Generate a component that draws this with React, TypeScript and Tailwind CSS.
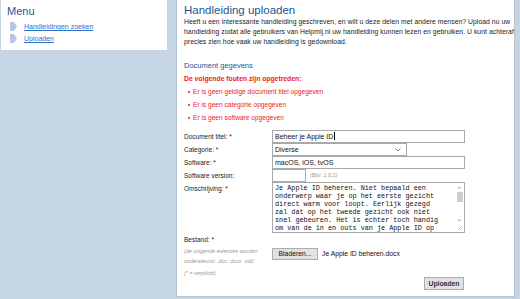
const fouten = [
  'Er is geen geldige document titel opgegeven',
  'Er is geen categorie opgegeven',
  'Er is geen software opgegeven',
];

const omschrijving = [
  'Je Apple ID beheren. Niet bepaald een',
  'onderwerp waar je op het eerste gezicht',
  'direct warm voor loopt. Eerlijk gezegd',
  'zal dat op het tweede gezicht ook niet',
  'snel gebeuren. Het is echter toch handig',
  'om van de in en outs van je Apple ID op',
];

const MenuArrow = () => (
  <svg width="7" height="9" viewBox="0 0 7 9" className="shrink-0">
    <path d="M0 0h4l3 4.5L4 9H0z" fill="#b6c7db" />
  </svg>
);

const Label = ({ children }: { children: React.ReactNode }) => (
  <div className="text-[6.5px] leading-[13px] text-[#222]">{children}</div>
);

const Box = ({ className, children }: { className: string; children?: React.ReactNode }) => (
  <div className={`border border-[#a9a9a9] bg-white px-[2px] text-[7px] leading-[11px] text-[#111] ${className}`}>
    {children}
  </div>
);

export default function App() {
  return (
    <div
      className="flex h-[299px] w-[520px] items-start bg-[#c5d5e3]"
      style={{ fontFamily: '"Liberation Sans", Arial, sans-serif' }}
    >
      {/* Menu */}
      <aside className="ml-px h-[50px] w-[166px] bg-white px-[6px] pt-[4px]">
        <h2 className="text-[11px] leading-[14px] text-[#1d5592]">Menu</h2>
        <ul className="mt-[4px] space-y-[3px] pl-[3px]">
          {['Handleidingen zoeken', 'Uploaden'].map((item) => (
            <li key={item} className="flex h-[9px] items-center gap-[7px]">
              <MenuArrow />
              <a className="text-[7px] leading-[9px] text-[#2c72c8] underline">{item}</a>
            </li>
          ))}
        </ul>
      </aside>

      {/* Content */}
      <main className="ml-[9px] h-[297px] w-[339px] border-x border-b border-[#b3c4d6] bg-white pl-[7px] pt-[4px]">
        <h1 className="text-[11.5px] leading-[12px] text-[#1d5592]">Handleiding uploaden</h1>
        <p className="mt-[1px] whitespace-nowrap text-[6.8px] leading-[10px] tracking-[0.05px] text-[#222]">
          <span className="block">
            Heeft u een interessante handleiding geschreven, en wilt u deze delen met andere mensen? Upload nu uw
          </span>
          <span className="block">
            handleiding zodat alle gebruikers van Helpmij.nl uw handleiding kunnen lezen en gebruiken. U kunt achteraf
          </span>
          <span className="block">precies zien hoe vaak uw handleiding is gedownload.</span>
        </p>

        <h3 className="mt-[14px] text-[7.5px] leading-[10px] text-[#1d5592]">Document gegevens</h3>
        <p className="mt-[3px] text-[6.8px] font-bold leading-[10px] text-[#f0191e]">
          De volgende fouten zijn opgetreden:
        </p>
        <ul className="mt-[3px] space-y-[3px] pl-[4px]">
          {fouten.map((f) => (
            <li key={f} className="flex items-center gap-[3px] text-[6.6px] leading-[10px] text-[#f0191e]">
              <span className="h-[2px] w-[2px] rounded-full bg-[#f0191e]" />
              {f}
            </li>
          ))}
        </ul>

        {/* Form */}
        <div className="mt-[7px] grid w-[281px] grid-cols-[88px_1fr]">
          <Label>Document titel: *</Label>
          <Box className="h-[13px]">
            Beheer je Apple ID<span className="ml-px inline-block h-[8px] w-px translate-y-[1px] bg-black" />
          </Box>

          <Label>Categorie: *</Label>
          <Box className="flex h-[13px] w-[135px] items-center justify-between pr-[5px]">
            <span>Diverse</span>
            <svg width="6" height="4" viewBox="0 0 6 4">
              <path d="M.5.5 3 3 5.5.5" fill="none" stroke="#555" strokeWidth="0.8" />
            </svg>
          </Box>

          <Label>Software: *</Label>
          <Box className="h-[13px]">macOS, iOS, tvOS</Box>

          <Label>Software version:</Label>
          <div className="flex items-center gap-[4px]">
            <Box className="h-[13px] w-[34px]" />
            <span className="text-[5.5px] italic text-[#999]">(Bijv. 1.0.2)</span>
          </div>

          <Label>Omschrijving: *</Label>
          <div className="relative flex h-[51px] border border-[#a9a9a9] bg-white">
            <div className="flex-1 whitespace-nowrap pl-[2px] pt-[1px] text-[6.8px] leading-[8px] text-[#111]" style={{ fontFamily: '"Liberation Mono", "Courier New", monospace' }}>
              {omschrijving.map((l) => (
                <div key={l}>{l}</div>
              ))}
            </div>
            <div className="flex w-[9px] flex-col items-center pb-[8px]">
              <svg width="5" height="7" viewBox="0 0 5 7" className="mt-[1px]">
                <path d="M1 4.5 2.5 3 4 4.5" fill="none" stroke="#666" strokeWidth="0.7" />
              </svg>
              <div className="mt-[1px] h-[10px] w-[6px] bg-[#cdcdcd]" />
              <div className="flex-1" />
              <svg width="5" height="7" viewBox="0 0 5 7">
                <path d="M1 2.5 2.5 4 4 2.5" fill="none" stroke="#666" strokeWidth="0.7" />
              </svg>
            </div>
            <svg width="6" height="6" viewBox="0 0 6 6" className="absolute bottom-[1px] right-[1px]">
              <path d="M5 1 1 5M5 3 3 5" stroke="#aaa" strokeWidth="0.6" />
            </svg>
          </div>

          <div className="pt-[2px]">
            <div className="text-[6.5px] leading-[10px] text-[#222]">Bestand: *</div>
            <div className="text-[5.4px] italic leading-[10px] text-[#999]">
              <div className="mt-[1px]">(de volgende extenties worden</div>
              <div>ondersteund: .doc .docx .odt)</div>
              <div className="mt-[2px]">(* = verplicht)</div>
            </div>
          </div>
          <div className="flex items-start gap-[4px] pt-[15px]">
            <button className="h-[12px] w-[46px] border border-[#adadad] bg-[#e1e1e1] text-[6.8px] leading-[10px] text-[#111]">
              Bladeren...
            </button>
            <span className="text-[6.8px] leading-[12px] text-[#111]">Je Apple ID beheren.docx</span>
          </div>
        </div>

        <div className="-mt-[1px] flex w-[280px] justify-end">
          <button className="h-[13px] w-[40px] border border-[#adadad] bg-[#e1e1e1] text-[6.8px] font-bold leading-[11px] text-[#333]">
            Uploaden
          </button>
        </div>
      </main>
    </div>
  );
}
